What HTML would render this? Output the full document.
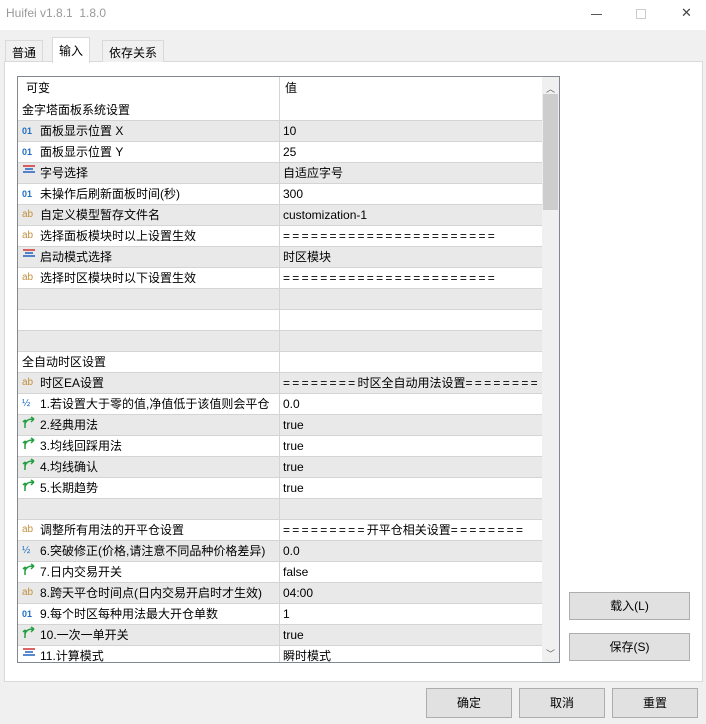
<!DOCTYPE html>
<html><head><meta charset="utf-8"><style>
*{margin:0;padding:0;box-sizing:border-box}
body{width:706px;height:724px;background:#f0f0f0;font-family:"Liberation Sans","Noto Sans CJK SC",sans-serif;font-size:12px;color:#000;position:relative;overflow:hidden}
.abs{position:absolute}
.title{left:0;top:0;width:706px;height:30px;background:#fff}
.title span{position:absolute;left:6px;top:6px;font-size:12px;color:#999}
.tab{position:absolute;height:22px;border:1px solid #d9d9d9;border-bottom:none;background:#f0f0f0;padding:3px 6px;font-size:12px}
.panel{left:4px;top:61px;width:699px;height:621px;background:#fff;border:1px solid #d9d9d9}
.grid{left:17px;top:76px;width:543px;height:587px;border:1px solid #828790;background:#fff;overflow:hidden}
.row{position:absolute;left:0;width:524px;height:21px;border-bottom:1px solid #d4d4d4;line-height:20px}
.row.g{background:#e9e9e9}
.c1{position:absolute;left:0;width:262px;height:21px;border-right:1px solid #d4d4d4;padding-left:4px;white-space:nowrap;overflow:hidden}
.c2{position:absolute;left:265px;white-space:nowrap}
.eq{letter-spacing:2.3px}
.ic{display:inline-block;width:16px;font-size:10px;text-align:left;margin-right:2px;vertical-align:top}
.sb{left:524px;top:0;width:17px;height:587px;background:#f0f0f0}
.btn{position:absolute;background:#e1e1e1;border:1px solid #adadad;text-align:center;font-size:12px}
</style></head><body>
<div class="abs title"><span>Huifei v1.8.1&nbsp;&nbsp;1.8.0</span>
<span style="left:591px;top:14px;width:11px;height:1px;background:#555"></span>
<span style="left:636px;top:9px;width:10px;height:10px;border:1px solid #ccc"></span>
<span style="left:681px;top:5px;font-size:13px;color:#444">✕</span></div>
<div class="tab" style="left:5px;top:40px;height:22px">普通</div>
<div class="abs panel"></div>
<div class="tab" style="left:52px;top:37px;height:26px;background:#fff;z-index:2;padding-top:4px">输入</div>
<div class="tab" style="left:102px;top:40px">依存关系</div>
<div class="abs grid">
<div class="row" style="top:0;height:23px;background:#fff;border-bottom:none"><div class="c1" style="height:23px;padding-left:8px;line-height:22px">可变</div><div class="c2" style="left:267px;line-height:22px">值</div></div>
<div id="rows"></div>
<div class="abs sb"><div class="abs" style="left:4px;top:5px;font-size:9px;color:#606060">︿</div>
<div class="abs" style="left:1px;top:17px;width:15px;height:116px;background:#cdcdcd"></div>
<div class="abs" style="left:4px;top:570px;font-size:9px;color:#606060">﹀</div></div>
</div>
<div class="btn" style="left:569px;top:592px;width:121px;height:28px;line-height:26px">载入(L)</div>
<div class="btn" style="left:569px;top:633px;width:121px;height:28px;line-height:26px">保存(S)</div>
<div class="btn" style="left:426px;top:688px;width:86px;height:30px;line-height:28px">确定</div>
<div class="btn" style="left:519px;top:688px;width:86px;height:30px;line-height:28px">取消</div>
<div class="btn" style="left:612px;top:688px;width:86px;height:30px;line-height:28px">重置</div>
<script>
var I={
n:'<span class="ic" style="color:#1e6fc0;font-weight:bold;font-size:9px">01</span>',
a:'<span class="ic" style="color:#c09040">ab</span>',
h:'<span class="ic" style="color:#1e6fc0">½</span>',
b:'<span class="ic"><svg width="14" height="14" viewBox="0 0 14 14"><path d="M3 13V5M3 5L1 7M3 5l2 2M3 9c1-4 4-5 9-5M12 4l-3-2M12 4L9 7" stroke="#22a040" stroke-width="1.5" fill="none"/></svg></span>',
e:'<span class="ic"><svg width="14" height="12" viewBox="0 0 14 12"><path d="M1 3h12" stroke="#d03030" stroke-width="1.5"/><path d="M3 6h8M1 9h12" stroke="#2060c0" stroke-width="1.5"/></svg></span>',
x:''};
var R=[
['x','金字塔面板系统设置',''],['n','面板显示位置 X','10'],['n','面板显示位置 Y','25'],['e','字号选择','自适应字号'],
['n','未操作后刷新面板时间(秒)','300'],['a','自定义模型暂存文件名','customization-1'],['a','选择面板模块时以上设置生效','======================='],
['e','启动模式选择','时区模块'],['a','选择时区模块时以下设置生效','======================='],['x','',''],['x','',''],['x','',''],
['x','全自动时区设置',''],['a','时区EA设置','========时区全自动用法设置========'],['h','1.若设置大于零的值,净值低于该值则会平仓','0.0'],
['b','2.经典用法','true'],['b','3.均线回踩用法','true'],['b','4.均线确认','true'],['b','5.长期趋势','true'],['x','',''],
['a','调整所有用法的开平仓设置','=========开平仓相关设置========'],['h','6.突破修正(价格,请注意不同品种价格差异)','0.0'],
['b','7.日内交易开关','false'],['a','8.跨天平仓时间点(日内交易开启时才生效)','04:00'],['n','9.每个时区每种用法最大开仓单数','1'],
['b','10.一次一单开关','true'],['e','11.计算模式','瞬时模式']];
var h='';R.forEach(function(r,i){var v=r[2].replace(/(=+)/g,'<span class="eq">$1</span>');h+='<div class="row'+(i%2?' g':'')+'" style="top:'+(23+i*21)+'px"><div class="c1">'+I[r[0]]+r[1]+'</div><div class="c2">'+v+'</div></div>';});
document.getElementById('rows').outerHTML=h;
</script>
</body></html>
